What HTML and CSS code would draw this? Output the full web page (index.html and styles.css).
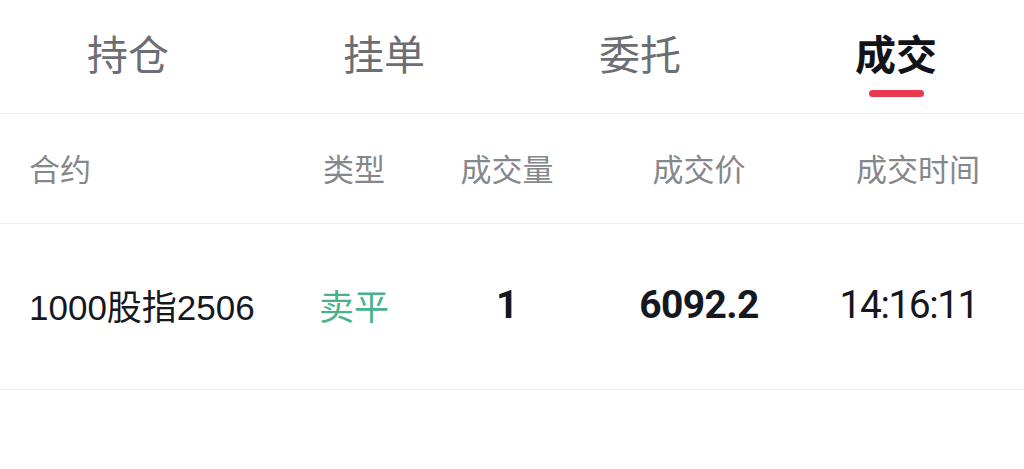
FILE: index.html
```html
<!DOCTYPE html>
<html lang="zh-CN">
<head>
<meta charset="utf-8">
<link rel="stylesheet" href="styles.css">
</head>
<body>
<div class="page">
  <nav class="tabs">
    <div class="tab">持仓</div>
    <div class="tab">挂单</div>
    <div class="tab">委托</div>
    <div class="tab active">成交<span class="bar"></span></div>
  </nav>
  <div class="row head">
    <div class="c1">合约</div>
    <div class="c2">类型</div>
    <div class="c3">成交量</div>
    <div class="c4">成交价</div>
    <div class="c5">成交时间</div>
  </div>
  <div class="row data">
    <div class="c1 name">1000股指2506</div>
    <div class="c2 sell">卖平</div>
    <div class="c3 num bold">1</div>
    <div class="c4 num bold">6092.2</div>
    <div class="c5 num time">14:16:11</div>
  </div>
</div>
</body>
</html>
```
FILE: styles.css
```css
* { box-sizing: border-box; }
html, body { margin: 0; padding: 0; background: #fff; }
body {
  font-family: "Noto Sans CJK SC", "Noto Sans", sans-serif;
  width: 1024px;
  height: 469px;
  overflow: hidden;
}
.tabs {
  display: grid;
  grid-template-columns: repeat(4, 1fr);
  height: 114px;
  border-bottom: 1px solid #efefef;
}
.tab {
  position: relative;
  text-align: center;
  font-size: 41px;
  line-height: 1;
  padding-top: 32px;
  color: #6c6e73;
}
.tab.active {
  color: #111318;
  font-weight: 700;
}
.tab .bar {
  position: absolute;
  left: 50%;
  top: 90px;
  width: 55px;
  height: 7px;
  margin-left: -27px;
  border-radius: 4px;
  background: #e8394f;
}
.row {
  display: grid;
  grid-template-columns: 261px 128px 178px 206px 178px;
  padding: 0 44px 0 29px;
  align-items: center;
  border-bottom: 1px solid #efefef;
}
.row > div { white-space: nowrap; }
.c1 { text-align: left; }
.c2, .c3, .c4 { text-align: center; }
.c5 { text-align: right; }
.head {
  height: 110px;
  padding-bottom: 2px;
  font-size: 31px;
  color: #86878b;
}
.data {
  height: 166px;
  padding-bottom: 4px;
  color: #15181e;
  font-size: 36px;
}
.name {
  font-family: "Liberation Sans", "Noto Sans CJK SC", sans-serif;
  font-size: 35px;
}
.sell {
  color: #48b38b;
  font-size: 35px;
}
.num {
  font-family: "Roboto", sans-serif;
  font-size: 39px;
}
.num.bold { font-weight: 700; letter-spacing: -0.6px; }
.time { letter-spacing: -1.5px; padding-right: 2px; }
```
